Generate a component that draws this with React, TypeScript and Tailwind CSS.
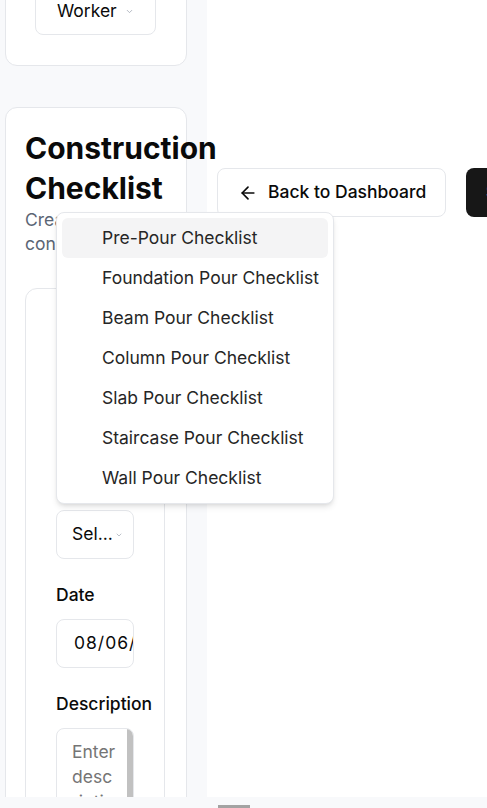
import React from "react";
import { ArrowLeft, ChevronDown } from "lucide-react";

const items = [
  "Pre-Pour Checklist",
  "Foundation Pour Checklist",
  "Beam Pour Checklist",
  "Column Pour Checklist",
  "Slab Pour Checklist",
  "Staircase Pour Checklist",
  "Wall Pour Checklist",
];

function Field({ label, children }: { label: string; children: React.ReactNode }) {
  return (
    <div className="flex flex-col gap-3">
      <div className="text-[17.5px] leading-6 font-medium text-[#0a0a0a]">{label}</div>
      {children}
    </div>
  );
}

export default function App() {
  return (
    <div className="relative w-[487px] h-[808px] overflow-hidden bg-white font-['Inter',sans-serif] text-[#0a0a0a]">
      <div className="flex h-[797px] overflow-hidden">
        {/* left column */}
        <div className="w-[207px] shrink-0 bg-[#f8f9fb] pl-[5px]">
          {/* card 1 */}
          <div className="mt-[-39px] w-[182px] rounded-xl border border-[#e5e7eb] bg-white pl-[29px] pt-6 pb-[30px]">
            <div className="flex h-[49px] w-[121px] items-center rounded-lg border border-[#e5e7eb] pl-[21px] pt-[2px] text-[17.5px]">
              <span>Worker</span>
              <ChevronDown size={9} strokeWidth={2} className="ml-[8px] text-[#9ca3af]" />
            </div>
          </div>

          {/* card 2 */}
          <div className="mt-[41px] w-[182px] h-[800px] rounded-xl border border-[#e5e7eb] bg-white py-5 pl-[19px] pr-5">
            <h1 className="text-[30px] leading-[40px] font-bold text-[#0a0a0a]">
              Construction Checklist
            </h1>
            <p className="text-[17.5px] leading-6 text-[#5b6675]">Create a new construction log</p>

            <div className="mt-8 w-[140px] h-[600px] rounded-xl border border-[#e5e7eb] bg-white px-[30px] pt-7">
              <div className="flex flex-col gap-6">
                <Field label="Checklist Type">
                  <div className="flex h-[49px] items-center rounded-lg border border-[#e5e7eb] pl-[15px] text-[17.5px]">
                    <span>Pre...</span>
                  </div>
                </Field>
                <Field label="Project Site">
                  <div className="flex h-[49px] items-center rounded-lg border border-[#e5e7eb] pl-[15px] text-[17.5px]">
                    <span>Sel...</span>
                    <ChevronDown size={8} strokeWidth={2} className="ml-[2px] text-[#9ca3af]" />
                  </div>
                </Field>
                <Field label="Date">
                  <div className="flex h-[49px] items-center overflow-hidden whitespace-nowrap rounded-lg border border-[#e5e7eb] pl-[17px] text-[17.5px] tracking-[1px]">
                    <span className="w-[60px] shrink-0 overflow-hidden">08/06/2025</span>
                  </div>
                </Field>
                <Field label="Description">
                  <div className="relative h-[120px] overflow-hidden rounded-lg border border-[#e5e7eb] pl-[15px] pt-[10px] text-[17.5px] leading-[25px] text-[#757575]">
                    Enter
                    <br />
                    desc
                    <br />
                    ription...
                    <div className="absolute right-0 top-0 h-full w-[6px] bg-[#c1c1c1]" />
                  </div>
                </Field>
              </div>
            </div>
          </div>
        </div>

        {/* right column */}
        <div className="flex min-w-0 flex-1 gap-5 overflow-hidden pl-[10px] pt-[168px]">
          <div className="flex h-[49px] w-[229px] shrink-0 items-center gap-[10px] rounded-lg border border-[#e5e7eb] bg-white pl-5 text-[17.5px] font-medium text-[#0a0a0a]">
            <ArrowLeft size={20} strokeWidth={2} />
            <span>Back to Dashboard</span>
          </div>
          <div className="flex h-[49px] w-[160px] shrink-0 items-center rounded-lg bg-[#171717] pl-5 text-[17.5px] font-medium text-white">
            Save
          </div>
        </div>
      </div>

      {/* bottom scrollbar */}
      <div className="relative h-[11px] bg-[#f8f9fb]">
        <div className="absolute left-[218px] top-[8px] h-[3px] w-[32px] bg-[#a3a3a3]" />
      </div>

      {/* dropdown */}
      <div className="absolute left-[56px] top-[212px] w-[278px] rounded-lg border border-[#e5e7eb] bg-white p-[5px] shadow-md">
        {items.map((it, i) => (
          <div
            key={it}
            className={
              "flex h-10 items-center rounded-md pl-10 text-[17.5px] text-[#262626] " +
              (i === 0 ? "bg-[#f4f4f5]" : "")
            }
          >
            {it}
          </div>
        ))}
      </div>
    </div>
  );
}
